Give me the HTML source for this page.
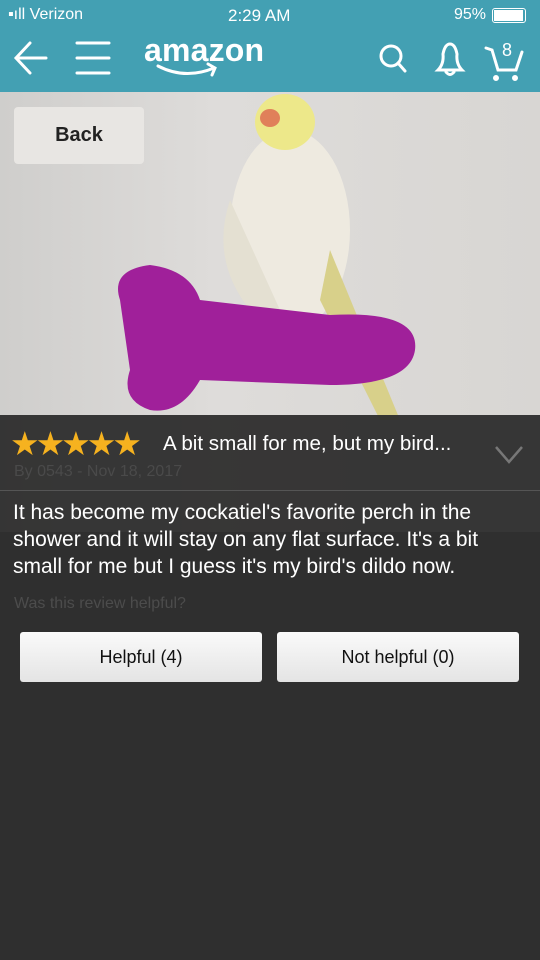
<!DOCTYPE html>
<html><head><meta charset="utf-8"><style>
*{margin:0;padding:0;box-sizing:border-box}
body{width:540px;height:960px;background:#2f2f2f;font-family:"Liberation Sans",sans-serif;position:relative;overflow:hidden}
.hdr{position:absolute;left:0;top:0;width:540px;height:92px;background:#43a0b3;color:#fff}
.img{position:absolute;left:0;top:92px;width:540px;height:440px;background:linear-gradient(90deg,#cfcecc,#dedcda 40%,#d8d6d3);overflow:hidden}
.ov{position:absolute;left:0;top:415px;width:540px;height:117px;background:rgba(40,40,40,.92)}
.t{position:absolute;color:#fff;white-space:nowrap}
.btn{position:absolute;top:632px;width:242px;height:50px;background:linear-gradient(#fafafa,#e4e4e4);border-radius:3px;font-size:18px;color:#111;text-align:center;line-height:50px}
</style></head><body>
<div class="img">
<svg width="540" height="440" viewBox="0 92 540 440">
<ellipse cx="290" cy="230" rx="60" ry="100" fill="#eeeae0"/>
<ellipse cx="285" cy="122" rx="30" ry="28" fill="#ede88a"/>
<ellipse cx="270" cy="118" rx="10" ry="9" fill="#e0805a"/>
<path d="M330 250 L400 420 L380 420 L320 300Z" fill="#d8d08a"/>
<path d="M230 200 Q210 260 250 310 L280 310Z" fill="#e4e0d2"/>
<path d="M120 300 Q110 270 150 265 Q190 270 200 300 L330 315 Q420 310 415 350 Q410 385 330 385 L200 380 Q180 415 150 410 Q120 400 130 370Z" fill="#a0209a"/>
</svg>
<div style="position:absolute;left:14px;top:15px;width:130px;height:57px;background:#e8e6e3;border-radius:4px;font-size:20px;font-weight:bold;color:#222;text-align:center;line-height:57px">Back</div>
</div>
<div class="ov"></div>
<div style="position:absolute;left:0;top:490px;width:540px;height:1px;background:#555"></div>
<div class="hdr">
<div class="t" style="left:8px;top:6px;font-size:16px">▪ıll Verizon</div>
<div class="t" style="left:228px;top:6px;font-size:17px">2:29 AM</div>
<div class="t" style="left:454px;top:6px;font-size:16px">95%</div>
<div style="position:absolute;left:492px;top:8px;width:34px;height:15px;border:1px solid #fff;border-radius:3px;padding:1px"><div style="background:#fff;height:100%;width:95%"></div></div>
<svg style="position:absolute;left:0;top:30px" width="540" height="62">
<g stroke="#fff" stroke-width="3" fill="none" stroke-linecap="round">
<path d="M46 28H16M30 13L16 28L30 43"/>
<path d="M77 13H109M77 28H109M77 43H109"/>
<path d="M158 36Q185 50 214 38M208 34l7 4-3 7"/>
<circle cx="391" cy="26" r="10"/><path d="M398 33l7 8"/>
<path d="M438 40Q444 34 443 24Q445 14 450 14Q455 14 457 24Q456 34 462 40Z M446 42Q450 47 454 42"/>
<path d="M486 18L492 20L498 40H516L522 22"/><circle cx="496" cy="48" r="1.5"/><circle cx="515" cy="48" r="1.5"/>
</g>
<text x="144" y="31" fill="#fff" font-size="32" font-weight="bold" font-family="Liberation Sans" textLength="120">amazon</text>
<text x="502" y="26" fill="#fff" font-size="18" font-family="Liberation Sans">8</text>
</svg>
</div>
<div class="t" style="left:10px;top:424px;font-size:33px;color:#f6b21f;letter-spacing:-4px">★★★★★</div>
<div class="t" style="left:163px;top:432px;font-size:20.6px">A bit small for me, but my bird...</div>
<svg style="position:absolute;left:494px;top:444px" width="30" height="22"><path d="M2 3L15 18L28 3" stroke="#777" stroke-width="2.5" fill="none"/></svg>
<div class="t" style="left:14px;top:463px;font-size:16px;color:#4a4a4a">By 0543 - Nov 18, 2017</div>
<div style="position:absolute;left:13px;top:499px;width:495px;font-size:21px;line-height:27px;color:#fff">It has become my cockatiel's favorite perch in the shower and it will stay on any flat surface. It's a bit small for me but I guess it's my bird's dildo now.</div>
<div class="t" style="left:14px;top:595px;font-size:16px;color:#4c4c4c">Was this review helpful?</div>
<div class="btn" style="left:20px">Helpful (4)</div>
<div class="btn" style="left:277px">Not helpful (0)</div>
</body></html>
